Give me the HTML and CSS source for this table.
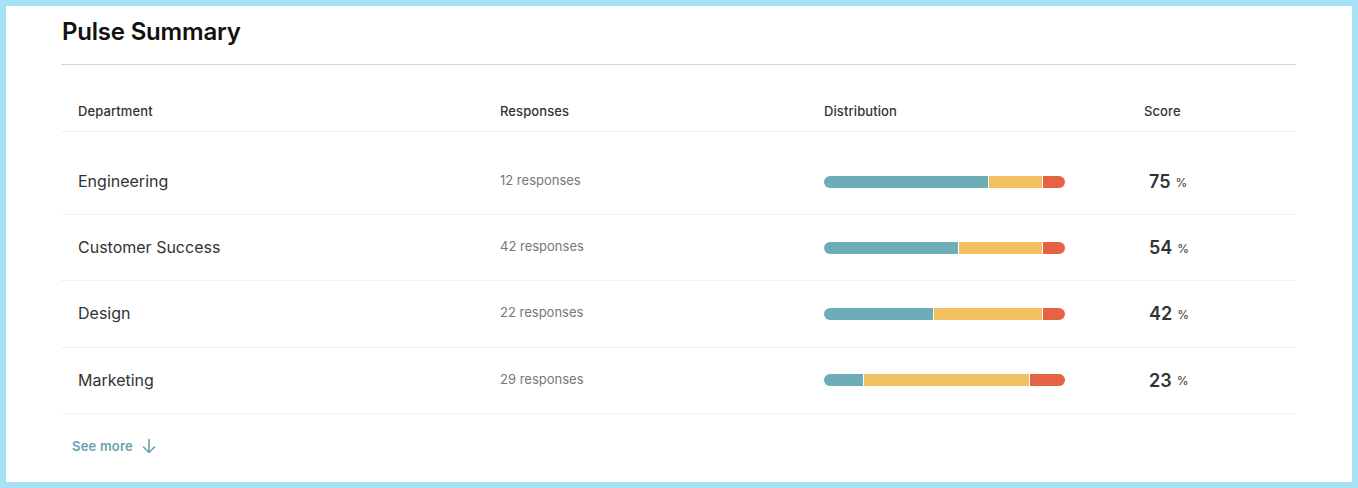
FILE: index.html
```html
<!DOCTYPE html>
<html>
<head>
<meta charset="utf-8">
<link rel="stylesheet" href="styles.css">
</head>
<body>
<div class="frame">
  <h1 class="title">Pulse Summary</h1>
  <div class="table">
    <div class="row head">
      <div class="cell">Department</div>
      <div class="cell">Responses</div>
      <div class="cell">Distribution</div>
      <div class="cell">Score</div>
    </div>
    <div class="row first">
      <div class="cell dept">Engineering</div>
      <div class="cell resp">12 responses</div>
      <div class="cell"><div class="bar"><span class="seg teal" style="width:165px"></span><span class="seg yellow" style="width:54px"></span><span class="seg red" style="width:22px"></span></div></div>
      <div class="cell score"><b>75</b><span>%</span></div>
    </div>
    <div class="row">
      <div class="cell dept">Customer Success</div>
      <div class="cell resp">42 responses</div>
      <div class="cell"><div class="bar"><span class="seg teal" style="width:135px"></span><span class="seg yellow" style="width:84px"></span><span class="seg red" style="width:22px"></span></div></div>
      <div class="cell score"><b>54</b><span>%</span></div>
    </div>
    <div class="row">
      <div class="cell dept">Design</div>
      <div class="cell resp">22 responses</div>
      <div class="cell"><div class="bar"><span class="seg teal" style="width:110px"></span><span class="seg yellow" style="width:109px"></span><span class="seg red" style="width:22px"></span></div></div>
      <div class="cell score"><b>42</b><span>%</span></div>
    </div>
    <div class="row">
      <div class="cell dept">Marketing</div>
      <div class="cell resp">29 responses</div>
      <div class="cell"><div class="bar"><span class="seg teal" style="width:39px"></span><span class="seg yellow" style="width:167px"></span><span class="seg red" style="width:35px"></span></div></div>
      <div class="cell score"><b>23</b><span>%</span></div>
    </div>
  </div>
  <a class="more" href="#">See more
    <svg width="14" height="16" viewBox="0 0 14 16" fill="none" stroke="#6a9fad" stroke-width="1.6" stroke-linecap="round" stroke-linejoin="round"><path d="M7 1.5v13M1.5 9l5.5 5.5L12.5 9"/></svg>
  </a>
</div>
</body>
</html>
```
FILE: styles.css
```css
* { box-sizing: border-box; }
html, body { margin: 0; padding: 0; background: #fff; }
body {
  font-family: "Inter", "DejaVu Sans", sans-serif;
  color: #333;
}
.frame {
  width: 1358px;
  height: 488px;
  border: 6px solid #a6e1f7;
  padding: 0 56px 0 55px;
  background: #fff;
}
.title {
  margin: 0;
  padding: 12px 0 0 1px;
  height: 59px;
  font-size: 24px;
  line-height: 28px;
  font-weight: 600;
  color: #111;
  letter-spacing: -0.2px;
  border-bottom: 1px solid #d2d2d2;
}
.table {
  margin-top: 26px;
}
.row {
  display: grid;
  grid-template-columns: 422px 324px 320px 1fr;
  align-items: center;
  height: 66.3px;
  border-bottom: 1px solid #f1f1f1;
}
.row.head {
  height: 41px;
  align-items: start;
  padding-top: 12px;
}
.row.first {
  height: 83px;
  padding-top: 17px;
}
.cell {
  padding-left: 17px;
}
.head .cell {
  font-size: 13px;
  font-weight: 500;
  color: #333;
  letter-spacing: 0.1px;
}
.dept {
  font-size: 16px;
  color: #333;
  margin-top: -1px;
}
.resp {
  font-size: 13px;
  color: #777;
  margin-top: -3px;
}
.bar {
  display: flex;
  width: 241px;
  height: 12px;
  border-radius: 6px;
  overflow: hidden;
  gap: 1px;
}
.seg { display: block; height: 100%; }
.seg.teal { background: #6dadb7; }
.seg.yellow { background: #f2bf62; }
.seg.red { background: #e56244; }
.score {
  padding-left: 22px;
  display: flex;
  align-items: center;
}
.score b {
  font-size: 18px;
  font-weight: 600;
  color: #333;
}
.score span {
  font-size: 12px;
  margin-left: 5px;
  margin-top: 1px;
  color: #333;
}
.more {
  display: inline-flex;
  align-items: center;
  gap: 9px;
  margin: 24px 0 0 11px;
  font-size: 13px;
  font-weight: 600;
  color: #6a9fad;
  letter-spacing: 0.2px;
  text-decoration: none;
}
```
